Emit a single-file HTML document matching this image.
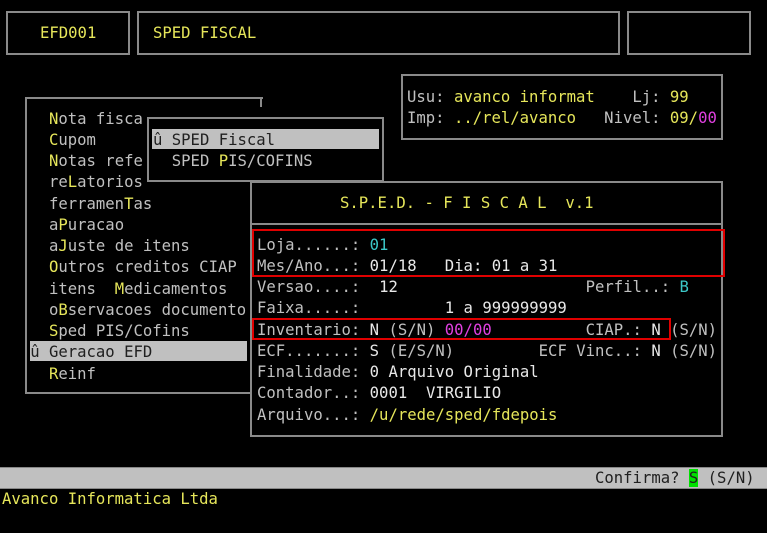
<!DOCTYPE html>
<html><head><meta charset="utf-8"><style>
body{margin:0;width:767px;height:533px;background:#000;position:relative;overflow:hidden;font-family:"DejaVu Sans Mono","Liberation Mono",monospace;font-size:15.6px;color:#c0c0c0}
.b{position:absolute;border:2px solid #8a8a8a;box-sizing:border-box;background:#000}
pre{position:absolute;margin:0;font:inherit;line-height:21.25px;white-space:pre}
.y{color:#e6e65a}.c{color:#3cc8c8}.m{color:#e040e0}
.hl{position:absolute;background:#c0c0c0}
.r{position:absolute;border:2px solid #e00000;box-sizing:border-box}
</style></head><body>
<div class="b" style="left:6px;top:11px;width:124px;height:44px"></div>
<div class="b" style="left:137px;top:11px;width:483px;height:44px"></div>
<div class="b" style="left:627px;top:11px;width:124px;height:44px"></div>
<pre class="y" style="left:40px;top:23px">EFD001</pre>
<pre class="y" style="left:153px;top:23px">SPED FISCAL</pre>

<div class="b" style="left:401px;top:74px;width:322px;height:66px"></div>
<pre style="left:407px;top:87px">Usu: <span class="y">avanco informat</span>    Lj: <span class="y">99</span>
Imp: <span class="y">../rel/avanco</span>   Nivel: <span class="y">09/</span><span class="m">00</span></pre>

<div class="b" style="left:25px;top:97px;width:238px;height:297px;border-right:none"></div>
<div style="position:absolute;left:260px;top:97px;width:2px;height:10px;background:#8a8a8a"></div>
<div class="hl" style="left:30px;top:341px;width:217px;height:20px"></div>
<pre style="left:30.2px;top:108.5px">  <span class="y">N</span>ota fisca
  <span class="y">C</span>upom
  <span class="y">N</span>otas refe
  re<span class="y">L</span>atorios
  ferramen<span class="y">T</span>as
  a<span class="y">P</span>uracao
  a<span class="y">J</span>uste de itens
  <span class="y">O</span>utros creditos CIAP
  itens  <span class="y">M</span>edicamentos
  o<span class="y">B</span>servacoes documento
  <span class="y">S</span>ped PIS/Cofins
<span style="color:#202020">û Geracao EFD</span>
  <span class="y">R</span>einf</pre>

<div class="b" style="left:147px;top:117px;width:237px;height:65px"></div>
<div class="hl" style="left:152px;top:129px;width:227px;height:20px"></div>
<pre style="left:153px;top:129.5px"><span style="color:#202020">û SPED Fiscal</span>
  SPED <span class="y">P</span>IS/COFINS</pre>

<div class="b" style="left:250px;top:181px;width:473px;height:256px"></div>
<div style="position:absolute;left:252px;top:223px;width:469px;height:2px;background:#8a8a8a"></div>
<pre class="y" style="left:340px;top:192.5px">S.P.E.D. - F I S C A L  v.1</pre>
<div class="r" style="left:252px;top:229px;width:473px;height:48px"></div>
<div class="r" style="left:252px;top:318px;width:419px;height:22px"></div>
<pre style="left:257px;top:234.5px">Loja......: <span class="c">01</span>
Mes/Ano...: <span style="color:#e8e8e8">01/18   Dia: 01 a 31</span>
Versao....:  <span style="color:#e8e8e8">12</span>                    Perfil..: <span class="c">B</span>
Faixa.....:         <span style="color:#e8e8e8">1 a 999999999</span>
Inventario: <span style="color:#e8e8e8">N</span> (S/N) <span class="m">00/00</span>          CIAP.: <span style="color:#e8e8e8">N</span> (S/N)
ECF.......: <span style="color:#e8e8e8">S</span> (E/S/N)         ECF Vinc..: <span style="color:#e8e8e8">N</span> (S/N)
Finalidade: <span style="color:#e8e8e8">0 Arquivo Original</span>
Contador..: <span style="color:#e8e8e8">0001  VIRGILIO</span>
Arquivo...: <span class="y">/u/rede/sped/fdepois</span></pre>

<div class="hl" style="left:0;top:467px;width:767px;height:22px;border-top:1px solid #888;border-bottom:1px solid #888;box-sizing:border-box"></div>
<pre style="left:595px;top:468px;color:#202020">Confirma? <span style="background:#00e000">S</span> (S/N)</pre>
<pre class="y" style="left:2px;top:489px">Avanco Informatica Ltda</pre>
</body></html>
